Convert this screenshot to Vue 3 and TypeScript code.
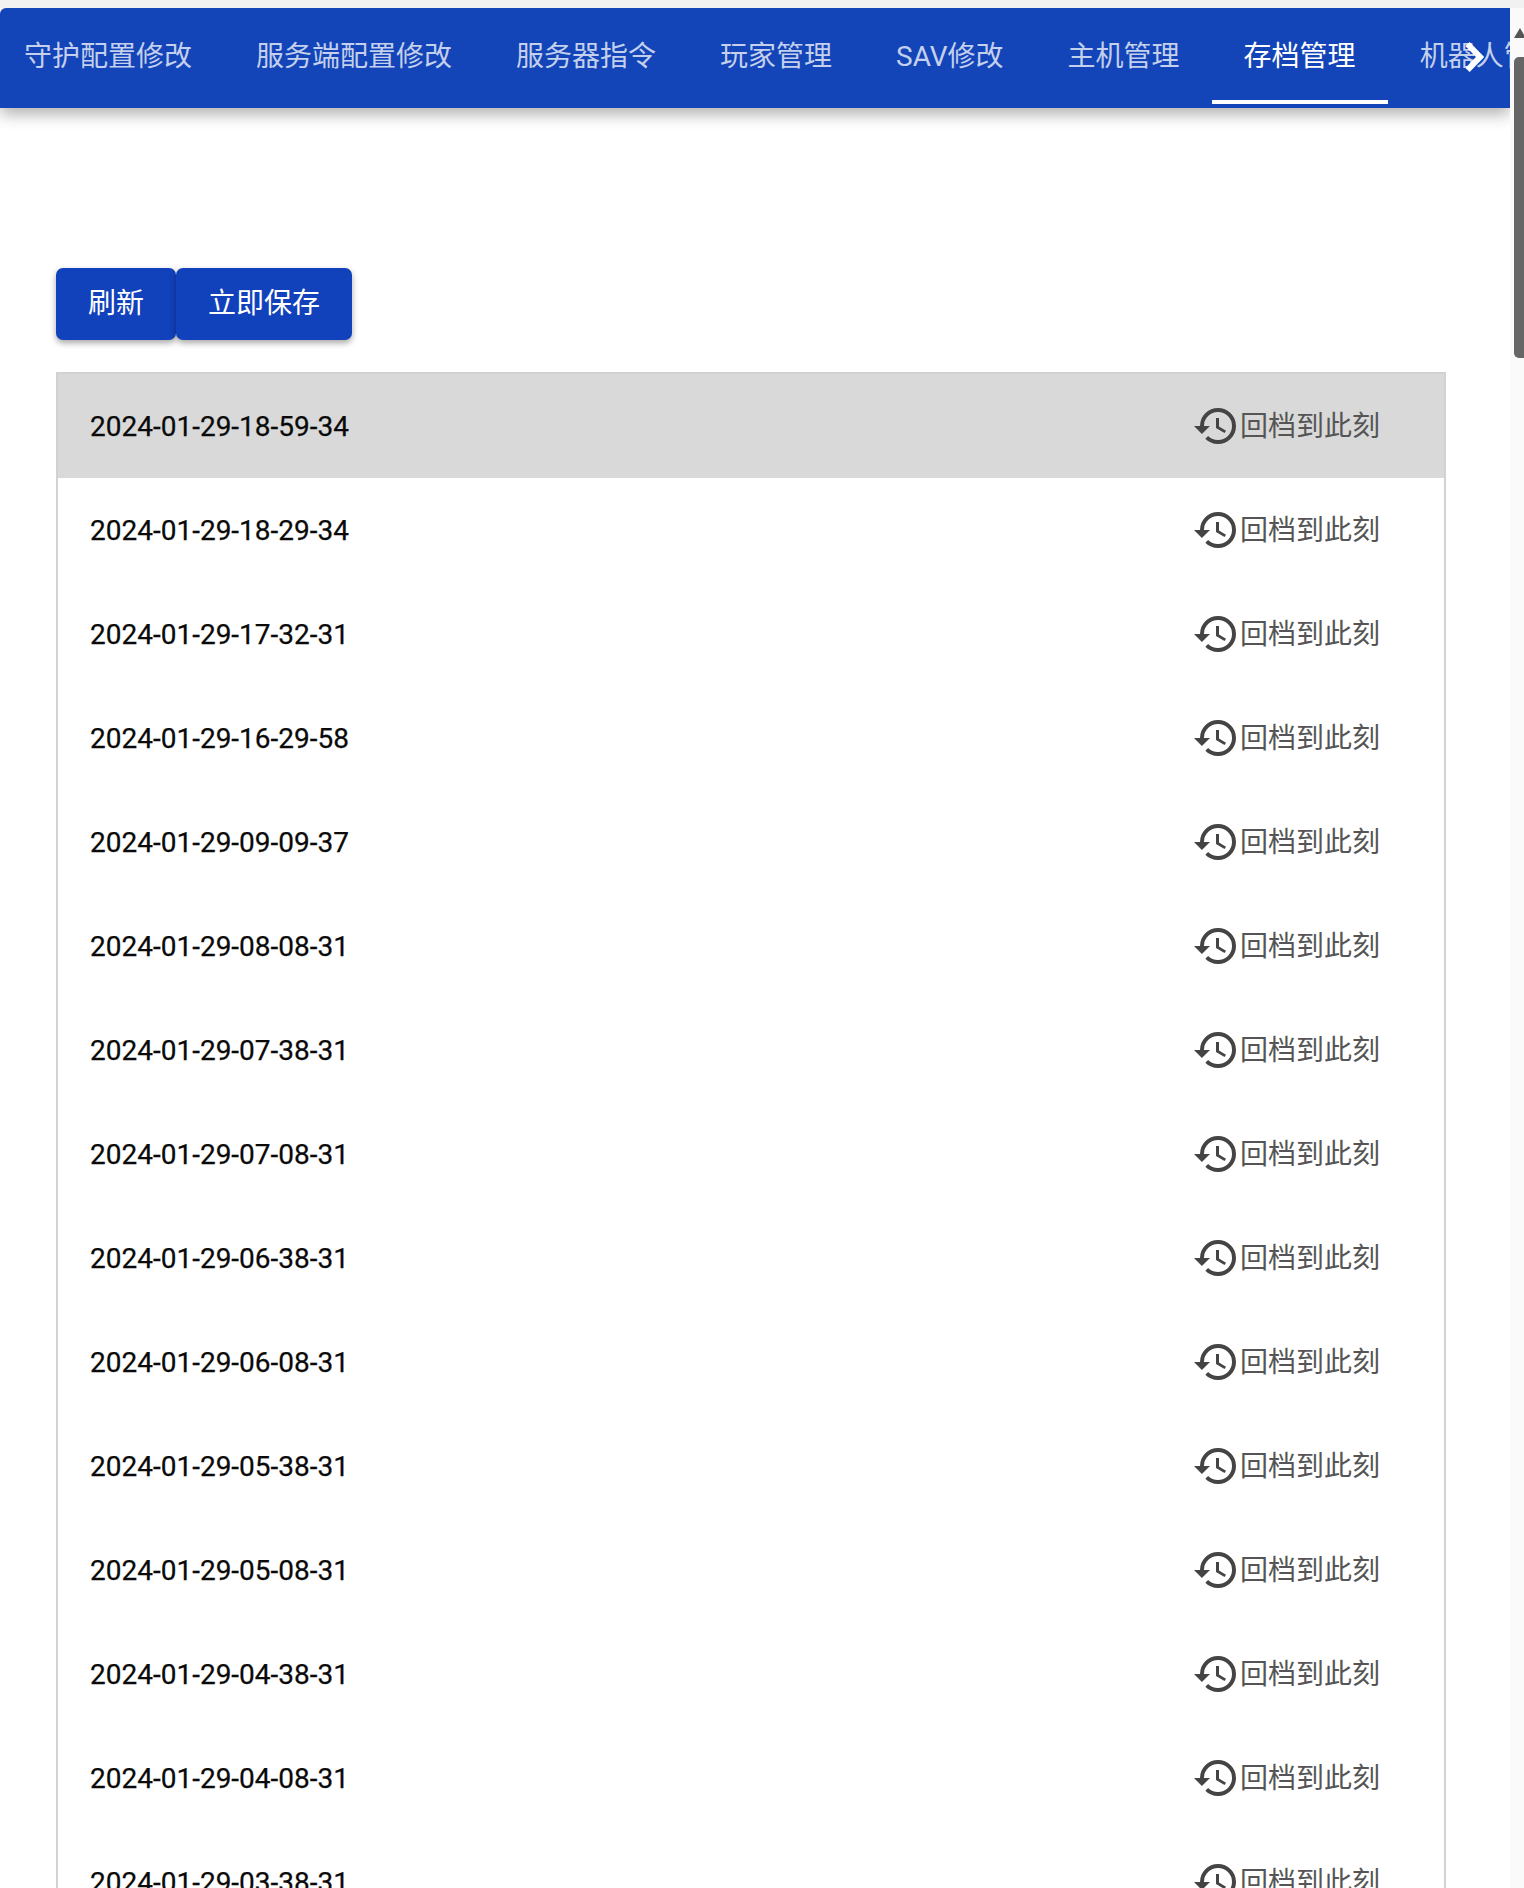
<script setup lang="ts">
// 存档管理页：顶部标签栏 + 操作按钮 + 存档列表
const tabs = ['守护配置修改', '服务端配置修改', '服务器指令', '玩家管理', 'SAV修改', '主机管理', '存档管理', '机器人管理']
const activeTab = '存档管理'

const saves = [
  '2024-01-29-18-59-34',
  '2024-01-29-18-29-34',
  '2024-01-29-17-32-31',
  '2024-01-29-16-29-58',
  '2024-01-29-09-09-37',
  '2024-01-29-08-08-31',
  '2024-01-29-07-38-31',
  '2024-01-29-07-08-31',
  '2024-01-29-06-38-31',
  '2024-01-29-06-08-31',
  '2024-01-29-05-38-31',
  '2024-01-29-05-08-31',
  '2024-01-29-04-38-31',
  '2024-01-29-04-08-31',
  '2024-01-29-03-38-31',
]

const historyPath =
  'M13.5,8H12V13L16.28,15.54L17,14.33L13.5,12.25V8M13,3A9,9 0 0,0 4,12H1L4.96,16.03L9,12H6A7,7 0 0,1 13,5A7,7 0 0,1 20,12A7,7 0 0,1 13,19C11.07,19 9.32,18.21 8.06,16.94L6.64,18.36C8.27,20 10.5,21 13,21A9,9 0 0,0 22,12A9,9 0 0,0 13,3'
</script>

<template>
  <div class="page">
    <div class="main">
      <header class="bar">
        <nav class="tabs">
          <a
            v-for="tab in tabs"
            :key="tab"
            class="tab"
            :class="{ 'tab--active': tab === activeTab }"
          >{{ tab }}</a>
        </nav>
        <svg class="bar__next" viewBox="0 0 20 32">
          <path d="M3.5 3 L16 16 L3.5 29" fill="none" stroke="#fff" stroke-width="6" />
        </svg>
      </header>

      <section class="content">
        <div class="actions">
          <button class="btn">刷新</button>
          <button class="btn">立即保存</button>
        </div>
        <ul class="list">
          <li v-for="(name, i) in saves" :key="name" class="row" :class="{ 'row--first': i === 0 }">
            <span class="row__name">{{ name }}</span>
            <a class="row__action">
              <svg class="row__icon" viewBox="0 0 24 24"><path :d="historyPath" fill="currentColor" /></svg>
              <span class="row__label">回档到此刻</span>
            </a>
          </li>
        </ul>
      </section>
    </div>

    <aside class="scrollbar">
      <i class="scrollbar__arrow" />
      <i class="scrollbar__thumb" />
    </aside>
  </div>
</template>

<style scoped>
.page {
  display: flex;
  height: 1888px;
  overflow: hidden;
  background: #fff;
  border-top: 8px solid #f1f1f1;
  box-sizing: border-box;
  font-family: Roboto, "Noto Sans CJK SC", sans-serif;
}
.main {
  flex: 0 0 1510px;
  width: 1510px;
}
.bar {
  position: relative;
  height: 100px;
  background: #1345b9;
  border-top-left-radius: 6px;
  box-shadow: 0 6px 16px rgba(0, 0, 0, 0.32);
}
.tabs {
  display: flex;
  height: 100px;
  overflow: hidden;
}
.tab {
  flex: none;
  box-sizing: border-box;
  height: 96px;
  padding: 4px 32px 0;
  font-size: 28px;
  line-height: 90px;
  color: rgba(255, 255, 255, 0.75);
  border-bottom: 4px solid transparent;
}
.tab:first-child {
  margin-left: -8px;
}
.tab--active {
  color: #fff;
  border-bottom-color: #fff;
}
.bar__next {
  position: absolute;
  left: 1464px;
  top: 33px;
  width: 20px;
  height: 32px;
}
.content {
  padding: 160px 0 0 56px;
}
.actions {
  display: flex;
  margin-bottom: 32px;
}
.btn {
  height: 72px;
  padding: 0 32px 6px;
  border: none;
  border-radius: 7px;
  background: #1141bb;
  color: #fff;
  font-family: Roboto, "Noto Sans CJK SC", sans-serif;
  font-size: 28px;
  box-shadow: 0 3px 6px rgba(0, 0, 0, 0.35);
}
.list {
  width: 1390px;
  box-sizing: border-box;
  margin: 0;
  padding: 0;
  list-style: none;
  border: 2px solid #d2d2d2;
  border-bottom: none;
}
.row {
  display: flex;
  align-items: center;
  justify-content: space-between;
  height: 104px;
  padding: 0 64px 0 32px;
}
.row--first {
  background: #d9d9d9;
}
.row__name {
  font-size: 28px;
  color: #0a0a0a;
  -webkit-text-stroke: 0.25px #0a0a0a;
}
.row__action {
  display: flex;
  align-items: center;
  color: #555;
  font-size: 28px;
}
.row__label {
  padding-bottom: 5px;
}
.row__icon {
  width: 48px;
  height: 48px;
  color: #444;
}
.scrollbar {
  position: relative;
  flex: 1;
  background: #fafafa;
}
.scrollbar__arrow {
  position: absolute;
  top: 20px;
  left: 4px;
  width: 0;
  height: 0;
  border-left: 6px solid transparent;
  border-right: 6px solid transparent;
  border-bottom: 10px solid #555;
}
.scrollbar__thumb {
  position: absolute;
  top: 49px;
  left: 4px;
  width: 10px;
  height: 301px;
  border-radius: 5px 0 0 5px;
  background: #666;
}
</style>

<style>
html,
body {
  margin: 0;
  overflow: hidden;
}
</style>
